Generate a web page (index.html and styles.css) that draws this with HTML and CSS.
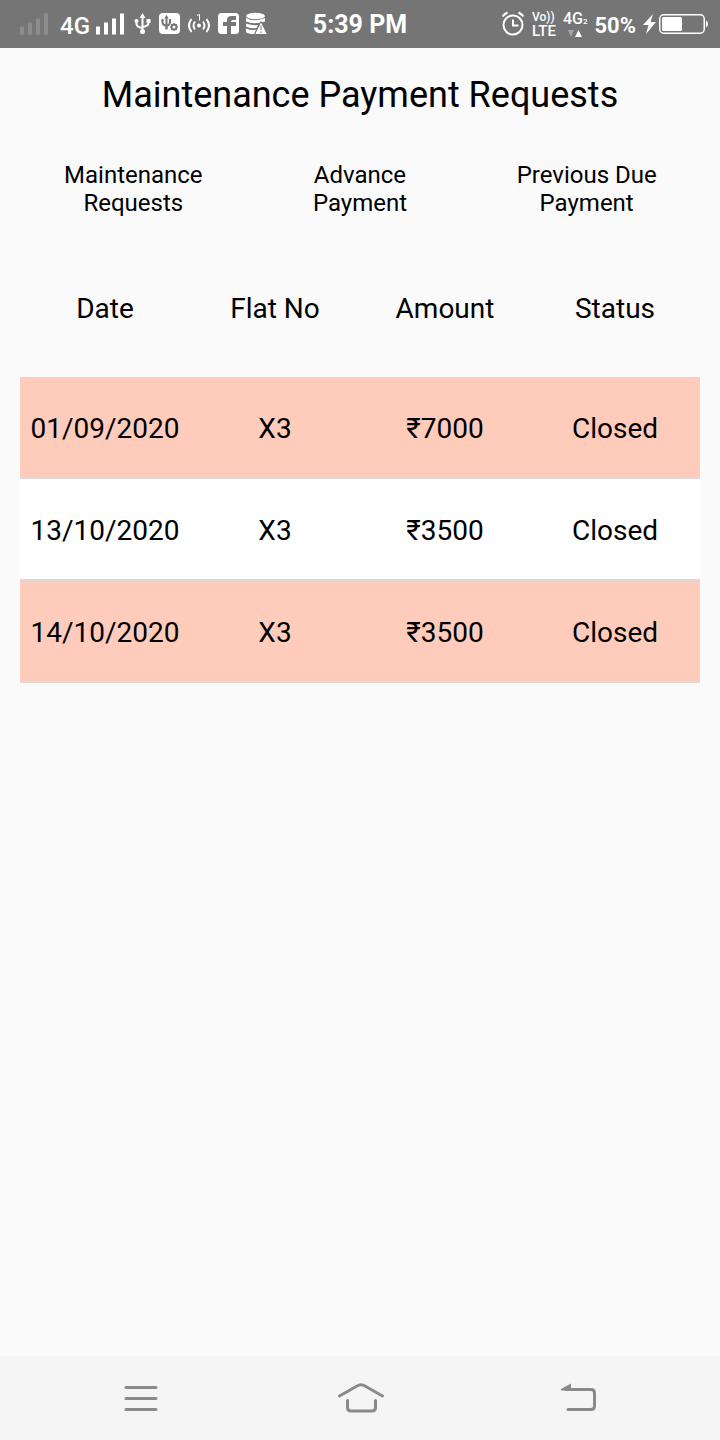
FILE: index.html
```
<!DOCTYPE html>
<html lang="en">
<head>
<meta charset="utf-8">
<meta name="viewport" content="width=device-width, initial-scale=1">
<title>Maintenance Payment Requests</title>
<link rel="stylesheet" href="styles.css">
</head>
<body>
<div class="screen">
  <header class="status-bar">
    <div class="status-left">
      <svg class="signal faded" width="28" height="24" viewBox="0 0 28 24"><path d="M2 14.500v8M10 10.500v12M18 6.500v16M26 1.500v21"/></svg>
      <span class="network">4G</span>
      <svg class="signal" width="28" height="24" viewBox="0 0 28 24"><path d="M2 14.500v8M10 10.500v12M18 6.500v16M26 1.500v21"/></svg>
      <svg class="usb" width="17" height="24" viewBox="0 0 17 24"><path class="line" d="M8.500 5v14M2.500 9v3q0 3 6 4M14.500 9v2q0 3-6 4"/><path d="M8.500 1l3 5h-6zM12.500 7h4v4h-4z"/><circle cx="2.500" cy="9" r="2"/><circle cx="8.500" cy="19.500" r="2.500"/></svg>
      <svg class="usb-settings" width="21" height="24" viewBox="0 0 21 24"><rect y="1" width="21" height="21" rx="4"/><g class="cut bold"><path d="M7.500 5v12M3.500 8v2q0 3 4 4M11 8v2q0 3-3.500 4"/><circle cx="15" cy="15" r="2.500"/></g><path class="cut" d="M15 11v1.500M15 17.500V19M11 15h1.500M17.500 15H19M12.200 12.200l1 1M16.800 16.800l1 1M17.800 12.200l-1 1M13.200 16.800l-1 1"/><path class="cut-fill" d="M7.500 3l2.200 3.500H5.300zM2.500 7h2v2h-2zM10 7h2v2h-2zM6.500 15.500h2v2h-2z"/></svg>
      <svg class="hotspot" width="22" height="24" viewBox="0 0 22 24"><path class="line" d="M7 9.500q-3 4 0 8M15 9.500q3 4 0 8M3.500 7q-5 6.500 0 13M18.500 7q5 6.500 0 13"/><circle cx="11" cy="13.500" r="2"/><path class="thin" d="M9 3.500l2.500-1v6"/></svg>
      <svg class="facebook" width="21" height="24" viewBox="0 0 21 24"><rect y="1" width="21" height="21" rx="3.500"/><path class="cut-fill" d="M9 22v-8H5v-4h4V8q0-4 4.500-4H18v4h-3q-2 0-2 2h5v4h-5v8z"/></svg>
      <svg class="database" width="22" height="24" viewBox="0 0 22 24"><ellipse cx="9.500" cy="4" rx="9.500" ry="3.200"/><path d="M0 6q8 4.500 19 0v3.500Q8 13 0 9.500zM0 11.500q7 2.500 12 1.500l-1.500 3Q4 17 0 14.500zM0 16.500q4 2 10 1.500l-2 4Q2 22 0 20z"/><path class="warning" d="M15 9.500l6.500 13h-13z"/><path class="cut" d="M15 13.500v4.500M15 19.500v1.500"/></svg>
    </div>
    <time class="clock">5:39 PM</time>
    <div class="status-right">
      <svg class="alarm" width="24" height="26" viewBox="0 0 24 26"><circle cx="12" cy="14" r="9.500"/><path d="M12 8.500v6h5.500M1.500 5.500Q3.500 3 6.500 1.500M22.500 5.500q-2-2.500-5-4"/></svg>
      <span class="volte"><span class="vo">Vo))</span><span class="lte">LTE</span></span>
      <span class="data"><span class="generation">4G<small>2</small></span><svg width="16" height="8" viewBox="0 0 16 8"><path class="down" d="M1 0h6L4 7z"/><path class="up" d="M8 7h7l-3.500-7z"/></svg></span>
      <span class="percent">50%</span>
      <svg class="bolt" width="13" height="20" viewBox="0 0 13 20"><path d="M10 0L0 11h5.500L3 20l10-12H7.500z"/></svg>
      <svg class="battery" width="49" height="20" viewBox="0 0 49 20"><rect class="case" x=".75" y=".75" width="44.500" height="18.500" rx="4"/><rect x="3" y="3" width="20" height="14" rx="1.500"/><path d="M47 6.500q2 .5 2 3.500t-2 3.500z"/></svg>
    </div>
  </header>
  <main class="content">
    <h1 class="title">Maintenance Payment Requests</h1>
    <nav class="tabs">
      <button class="tab" type="button">Maintenance<br>Requests</button>
      <button class="tab" type="button">Advance<br>Payment</button>
      <button class="tab" type="button">Previous Due<br>Payment</button>
    </nav>
    <table class="requests">
      <thead><tr><th scope="col">Date</th><th scope="col">Flat No</th><th scope="col">Amount</th><th scope="col">Status</th></tr></thead>
      <tbody>
        <tr><td>01/09/2020</td><td>X3</td><td>₹7000</td><td>Closed</td></tr>
        <tr><td>13/10/2020</td><td>X3</td><td>₹3500</td><td>Closed</td></tr>
        <tr><td>14/10/2020</td><td>X3</td><td>₹3500</td><td>Closed</td></tr>
      </tbody>
    </table>
  </main>
  <footer class="nav-bar">
    <button class="nav-button" type="button" aria-label="Recent apps"><svg width="48" height="32" viewBox="0 0 48 32"><path d="M9 5.500h30M9 16.500h30M9 27.500h30"/></svg></button>
    <button class="nav-button" type="button" aria-label="Home"><svg width="48" height="32" viewBox="0 0 48 32"><path d="M2.500 14L20 4q4-2.500 8 0l17.500 10M10.500 18.500v7q0 3.500 3.500 3.500h21q3.500 0 3.500-3.500v-7"/></svg></button>
    <button class="nav-button" type="button" aria-label="Back"><svg width="48" height="32" viewBox="0 0 48 32"><path d="M9 7.500h25q3.500 0 3.500 3.500v13q0 3.500-3.500 3.500H11"/><path class="arrow" d="M4 8.500V7L14 1.500v7z"/></svg></button>
  </footer>
</div>
</body>
</html>
```
FILE: styles.css
```
* { box-sizing: border-box; }
body { margin: 0; font-family: Roboto, "Noto Sans", sans-serif; color: #000; background: #fafafa; }
button { border: 0; padding: 0; background: none; font: inherit; color: inherit; }
.screen { display: flex; flex-direction: column; min-height: 100vh; }

.status-bar { display: grid; grid-template-columns: 1fr auto 1fr; align-items: center; height: 48px; padding: 0 12px; background: #757575; color: #fff; }
.status-left, .status-right { display: flex; align-items: center; }
.status-left { gap: 8px; width: 0; padding-left: 8px; }
.status-right { justify-content: flex-end; gap: 7px; }
.status-bar svg { display: block; flex: none; fill: #fff; }
.status-bar .signal { margin: 0 2px 0 -2px; fill: none; stroke: #fff; stroke-width: 4; }
.status-bar .faded { margin: 0 4px 0 0; stroke: #8c8c8c; }
.network { font-size: 24px; line-height: 28px; font-weight: 500; padding-top: 4px; }
.status-bar .line, .status-bar .thin { fill: none; stroke: #fff; stroke-width: 2; }
.status-bar .thin { stroke-width: 1; }
.cut { fill: none; stroke: #757575; stroke-width: 1; }
.bold { stroke-width: 2; }
.cut-fill { fill: #757575; }
.warning { stroke: #757575; stroke-width: 1; }
.status-bar .database { margin-left: -1px; }
.clock { font-size: 25px; line-height: 32px; font-weight: 700; padding-top: 2px; }
.status-bar .alarm { fill: none; stroke: #fff; stroke-width: 2; }
.volte { display: flex; flex-direction: column; line-height: 14px; font-weight: 500; }
.vo { font-size: 12px; }
.lte { font-size: 15px; }
.data { display: flex; flex-direction: column; align-items: center; }
.generation { font-size: 16px; line-height: 16px; font-weight: 500; }
.generation small { font-size: 8px; }
.status-bar .down { fill: #a5a5a5; }
.percent { font-size: 22px; line-height: 28px; font-weight: 700; padding-top: 4px; }
.status-bar .battery { margin-left: -4px; }
.status-bar .case { fill: none; stroke: #fff; stroke-width: 1.5; }

.content { flex: 1; padding: 26px 20px 0; }
.title { margin: 0; font-size: 36px; line-height: 42px; font-weight: 400; text-align: center; }
.tabs { display: grid; grid-template-columns: repeat(3, 1fr); margin-top: 45px; font-size: 24px; line-height: 28px; }
.requests { width: 100%; margin-top: 24px; table-layout: fixed; border-collapse: separate; border-spacing: 0; font-size: 28px; line-height: 32px; text-align: center; }
.requests th { height: 136px; padding: 0; font-weight: 400; }
.requests td { height: 102px; padding: 4px 0 0; border-bottom: 2px solid #e0d8d6; background: #fff; }
.requests tbody tr:nth-child(odd) td { background: #ffccbc; }

.nav-bar { display: flex; justify-content: space-between; align-items: center; height: 84px; padding: 0 115px 0 117px; background: #f5f5f5; }
.nav-button svg { display: block; fill: none; stroke: #8a8a8a; stroke-width: 3; stroke-linecap: round; }
.nav-button .arrow { fill: #8a8a8a; stroke: none; }
```
